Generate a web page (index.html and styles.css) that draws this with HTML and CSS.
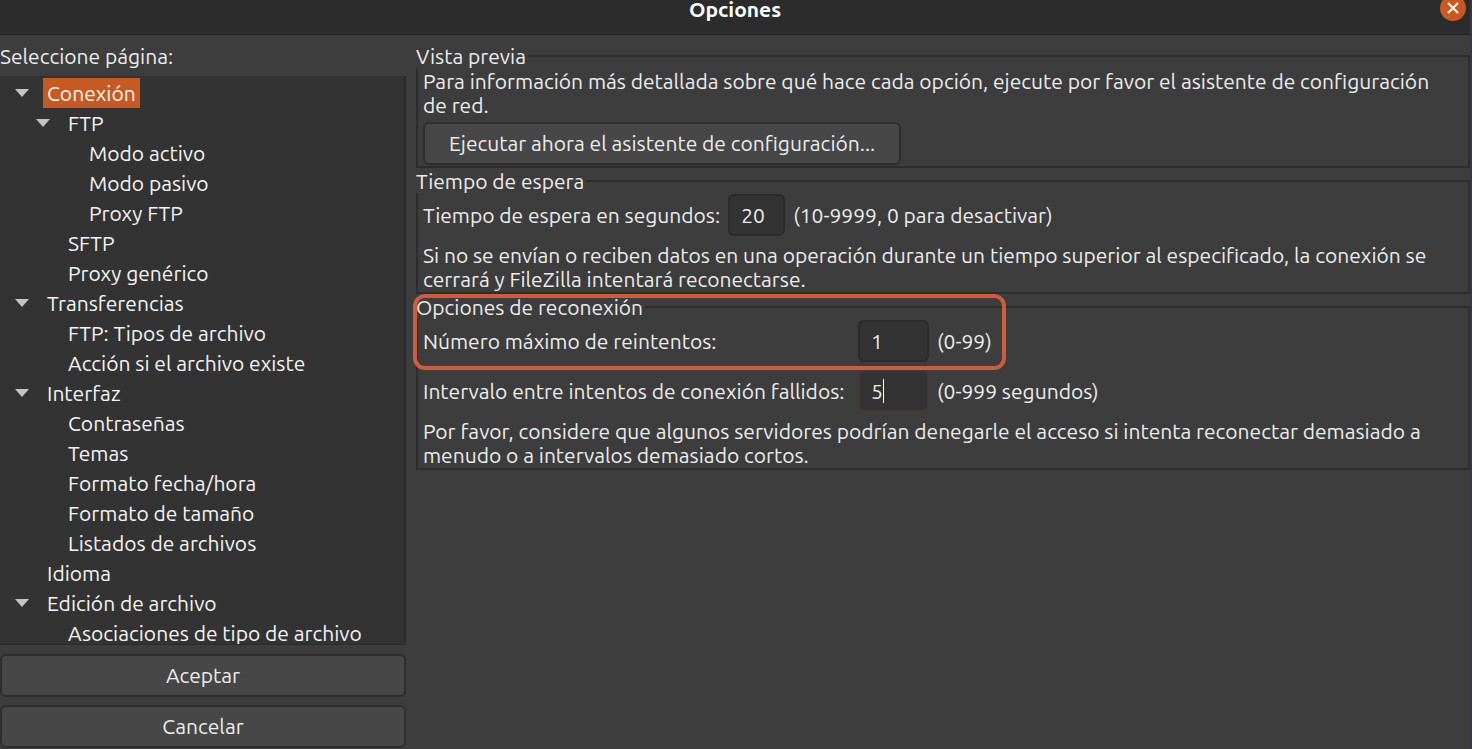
FILE: index.html
```html
<!DOCTYPE html>
<html lang="es">
<head>
<meta charset="utf-8">
<title>Opciones</title>
<link rel="stylesheet" href="styles.css">
</head>
<body>
<div class="window">
  <header class="titlebar">
    <h1 class="title">Opciones</h1>
    <button class="close" type="button" aria-label="Cerrar">
      <svg viewBox="0 0 26 26" width="26" height="26" aria-hidden="true"><circle cx="13" cy="13" r="13" fill="#c75a23"/><path d="M8 8l10 10M18 8L8 18" stroke="#fbeee8" stroke-width="2.2" fill="none"/></svg>
    </button>
  </header>
  <main class="body">
    <nav class="side">
      <h2 class="side-title" id="pages">Seleccione página:</h2>
      <ul class="tree" aria-labelledby="pages">
        <li><div class="row"><button class="toggle" type="button" aria-label="Contraer Conexión"></button><a class="label selected" href="#conexion" aria-current="page">Conexión</a></div>
          <ul>
            <li><div class="row"><button class="toggle" type="button" aria-label="Contraer FTP"></button><a class="label" href="#ftp">FTP</a></div>
              <ul>
                <li><div class="row leaf"><a class="label" href="#activo">Modo activo</a></div></li>
                <li><div class="row leaf"><a class="label" href="#pasivo">Modo pasivo</a></div></li>
                <li><div class="row leaf"><a class="label" href="#proxy-ftp">Proxy FTP</a></div></li>
              </ul>
            </li>
            <li><div class="row leaf"><a class="label" href="#sftp">SFTP</a></div></li>
            <li><div class="row leaf"><a class="label" href="#proxy">Proxy genérico</a></div></li>
          </ul>
        </li>
        <li><div class="row"><button class="toggle" type="button" aria-label="Contraer Transferencias"></button><a class="label" href="#transferencias">Transferencias</a></div>
          <ul>
            <li><div class="row leaf"><a class="label" href="#tipos">FTP: Tipos de archivo</a></div></li>
            <li><div class="row leaf"><a class="label" href="#existe">Acción si el archivo existe</a></div></li>
          </ul>
        </li>
        <li><div class="row"><button class="toggle" type="button" aria-label="Contraer Interfaz"></button><a class="label" href="#interfaz">Interfaz</a></div>
          <ul>
            <li><div class="row leaf"><a class="label" href="#contrasenas">Contraseñas</a></div></li>
            <li><div class="row leaf"><a class="label" href="#temas">Temas</a></div></li>
            <li><div class="row leaf"><a class="label" href="#fecha">Formato fecha/hora</a></div></li>
            <li><div class="row leaf"><a class="label" href="#tamano">Formato de tamaño</a></div></li>
            <li><div class="row leaf"><a class="label" href="#listados">Listados de archivos</a></div></li>
          </ul>
        </li>
        <li><div class="row leaf"><a class="label" href="#idioma">Idioma</a></div></li>
        <li><div class="row"><button class="toggle" type="button" aria-label="Contraer Edición de archivo"></button><a class="label" href="#edicion">Edición de archivo</a></div>
          <ul>
            <li><div class="row leaf"><a class="label" href="#asociaciones">Asociaciones de tipo de archivo</a></div></li>
          </ul>
        </li>
      </ul>
      <div class="actions">
        <button class="button" type="button">Aceptar</button>
        <button class="button" type="button">Cancelar</button>
      </div>
    </nav>
    <form class="page">
      <fieldset class="group">
        <legend>Vista previa</legend>
        <p class="text">Para información más detallada sobre qué hace cada opción, ejecute por favor el asistente de configuración de red.</p>
        <button class="button wizard" type="button">Ejecutar ahora el asistente de configuración...</button>
      </fieldset>
      <fieldset class="group">
        <legend>Tiempo de espera</legend>
        <div class="field">
          <label for="timeout">Tiempo de espera en segundos:</label>
          <input class="input short" id="timeout" type="text" value="20">
          <span>(10-9999, 0 para desactivar)</span>
        </div>
        <p class="text after">Si no se envían o reciben datos en una operación durante un tiempo superior al especificado, la conexión se cerrará y FileZilla intentará reconectarse.</p>
      </fieldset>
      <div class="marked">
        <fieldset class="group">
          <legend>Opciones de reconexión</legend>
          <div class="fields">
            <label for="retries">Número máximo de reintentos:</label>
            <input class="input" id="retries" type="text" value="1">
            <span>(0-99)</span>
            <label for="delay">Intervalo entre intentos de conexión fallidos:</label>
            <input class="input active" id="delay" type="text" value="5">
            <span>(0-999 segundos)</span>
          </div>
          <p class="text after">Por favor, considere que algunos servidores podrían denegarle el acceso si intenta reconectar demasiado a menudo o a intervalos demasiado cortos.</p>
        </fieldset>
        <div class="marker"></div>
      </div>
    </form>
  </main>
</div>
</body>
</html>
```
FILE: styles.css
```css
* { box-sizing: border-box; }
body {
  margin: 0;
  background: #3d3d3d;
  color: #ececec;
  font: 21px/24px "Ubuntu", "Noto Sans", sans-serif;
}
button, input { font: inherit; color: inherit; }
.window {
  display: flex;
  flex-direction: column;
  height: 100vh;
  min-height: 480px;
  overflow: hidden;
  border-right: 2px solid #383745;
}
.titlebar {
  display: grid;
  grid-template-columns: 1fr auto 1fr;
  align-items: start;
  height: 35px;
  flex: none;
  background: #2c2c2c;
  border-bottom: 1px solid #242424;
}
.title {
  grid-column: 2;
  margin: 0;
  font-size: 21px;
  line-height: 19px;
  font-weight: 700;
  color: #fff;
}
.close {
  justify-self: end;
  width: 26px;
  height: 26px;
  margin: -5px 4px 0 0;
  padding: 0;
  border: 0;
  background: none;
}
.close svg { display: block; }
.body {
  display: grid;
  grid-template-columns: 406px 1fr;
  column-gap: 10px;
  flex: 1;
  min-height: 0;
}
.side {
  display: flex;
  flex-direction: column;
  min-height: 0;
  padding-top: 9px;
}
.side-title {
  margin: 0 0 8px;
  font-size: 21px;
  line-height: 24px;
  font-weight: 400;
}
.tree {
  flex: 1;
  min-height: 0;
  overflow: hidden;
  padding-top: 2px;
  background: #333;
  border-right: 2px solid #2c2c2c;
  border-bottom: 1px solid #2b2b2b;
}
.tree, .tree ul { margin: 0; list-style: none; }
.tree { padding-left: 0; }
.tree ul { padding-left: 21px; }
.row {
  display: flex;
  align-items: center;
  gap: 14px;
  height: 30px;
  padding-left: 15px;
}
.leaf { padding-left: 43px; }
.toggle {
  width: 14px;
  height: 8px;
  padding: 0;
  border: 0;
  background: #c4c4c4;
  clip-path: polygon(0 0, 100% 0, 50% 100%);
}
.label {
  padding: 0 4px;
  line-height: 30px;
  color: #f4f4f4;
  text-decoration: none;
  white-space: nowrap;
}
.selected { background: #c75a23; }
.actions {
  display: grid;
  gap: 8px;
  padding: 9px 0 1px;
}
.button {
  height: 43px;
  padding: 0 24px 2px;
  border: 2px solid #2e2e2e;
  border-radius: 6px;
  background: #474747;
}
.page {
  display: flex;
  flex-direction: column;
  gap: 1px;
  padding-top: 9px;
}
.group {
  min-width: 0;
  margin: 0;
  padding: 1px 18px 1px 5px;
  border: 2px solid #2d2d2d;
}
.group legend {
  margin-left: -7px;
  padding: 0 2px 0 0;
  background: #3d3d3d;
}
.text { margin: 0; }
.after { margin-top: 7px; }
.wizard { display: block; margin-top: 5px; }
.field {
  display: flex;
  align-items: center;
  gap: 8px;
}
.fields {
  display: grid;
  grid-template-columns: minmax(427px, max-content) 71px 1fr;
  align-items: center;
  gap: 8px;
}
.input {
  width: 100%;
  height: 42px;
  padding: 0 11px;
  border: 2px solid #2b2b2b;
  border-radius: 6px;
  background: #333;
  outline: 0;
}
.short { width: 57px; }
.active {
  border-color: #443831;
  background: linear-gradient(#fff, #fff) 23px 50% / 1px 24px no-repeat #333;
}
.marked { position: relative; }
.marker {
  position: absolute;
  top: -1px;
  left: -3px;
  width: 593px;
  height: 76px;
  border: 4px solid #cb5d40;
  border-radius: 12px;
  pointer-events: none;
}
```
